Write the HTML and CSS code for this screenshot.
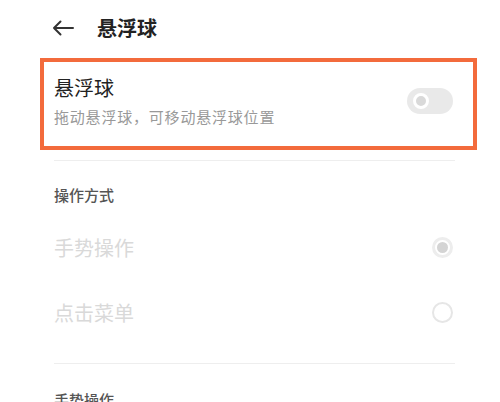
FILE: index.html
```html
<!DOCTYPE html>
<html lang="zh-CN">
<head>
    <meta charset="UTF-8">
    <meta name="viewport" content="width=device-width, initial-scale=1.0">
    <title>悬浮球</title>
    <link rel="stylesheet" href="styles.css">
</head>
<body>
    <div class="page">
        <div class="header">
            <svg class="back" width="22" height="16" viewBox="0 0 22 16">
                <path d="M21 8H2M8.5 1.5L2 8l6.5 6.5" fill="none" stroke="#333" stroke-width="2" stroke-linecap="round" stroke-linejoin="round"/>
            </svg>
            <h1>悬浮球</h1>
        </div>

        <div class="switch-row">
            <div class="switch-text">
                <div class="switch-title">悬浮球</div>
                <div class="switch-desc">拖动悬浮球，可移动悬浮球位置</div>
            </div>
            <span class="toggle"><span class="knob"></span></span>
        </div>

        <div class="divider"></div>

        <div class="section-title">操作方式</div>
        <div class="option">
            <span class="option-label">手势操作</span>
            <span class="radio checked"><span class="dot"></span></span>
        </div>
        <div class="option">
            <span class="option-label">点击菜单</span>
            <span class="radio"></span>
        </div>

        <div class="divider"></div>

        <div class="section-title last">手势操作</div>
    </div>
</body>
</html>
```

FILE: styles.css
```css
body {
    margin: 0;
    background: #fff;
    font-family: "Noto Sans CJK SC", "Noto Sans", sans-serif;
}
.page {
    width: 500px;
    height: 402px;
    overflow: hidden;
}
.header {
    display: flex;
    align-items: center;
    height: 28px;
    padding: 14px 0 16px 52px;
}
.back {
    display: block;
}
.header h1 {
    margin: 0 0 0 23px;
    font-size: 20px;
    line-height: 28px;
    font-weight: 700;
    color: #222;
}
.switch-row {
    display: flex;
    align-items: center;
    justify-content: space-between;
    margin: 0 23px 0 40px;
    padding: 12px 20px 19px 10px;
    border: 4px solid #f36b3c;
}
.switch-title {
    font-size: 20px;
    line-height: 28px;
    color: #222;
}
.switch-desc {
    margin-top: 5px;
    font-size: 15px;
    line-height: 20px;
    letter-spacing: 0.8px;
    color: #999;
}
.toggle {
    display: flex;
    align-items: center;
    width: 46px;
    height: 26px;
    border-radius: 13px;
    background: #e9e9e9;
}
.knob {
    width: 10px;
    height: 10px;
    margin-left: 6px;
    border: 3px solid #fff;
    border-radius: 50%;
    background: #d9d9d9;
}
.divider {
    height: 1px;
    margin: 10px 45px 0 54px;
    background: #eeeeee;
}
.section-title {
    padding: 24px 0 0 54px;
    margin-bottom: 10px;
    font-size: 15px;
    line-height: 20px;
    font-weight: 500;
    color: #555;
}
.section-title.last {
    padding-top: 26px;
}
.option {
    display: flex;
    align-items: center;
    justify-content: space-between;
    height: 65px;
    padding: 0 47px 0 54px;
}
.option + .divider {
    margin-top: 18px;
}
.option-label {
    font-size: 20px;
    line-height: 28px;
    color: #d9d9d9;
}
.radio {
    box-sizing: border-box;
    width: 21px;
    height: 21px;
    border: 2px solid #e6e6e6;
    border-radius: 50%;
}
.radio.checked {
    display: flex;
    align-items: center;
    justify-content: center;
    border: 3px solid #ededed;
}
.dot {
    width: 11px;
    height: 11px;
    border-radius: 50%;
    background: #d4d4d4;
}
```
